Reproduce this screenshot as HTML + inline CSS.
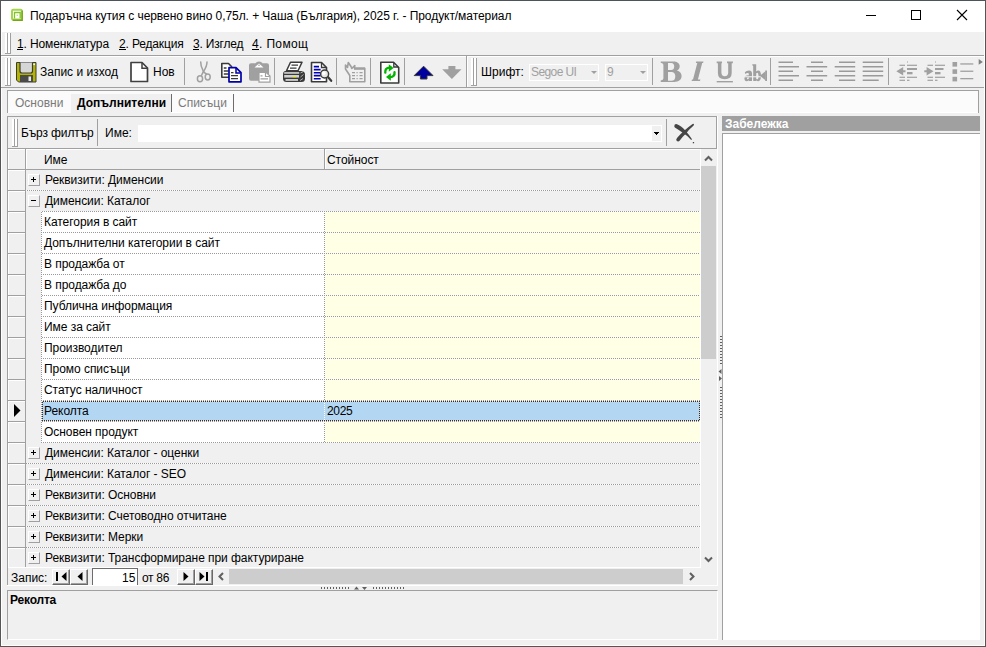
<!DOCTYPE html>
<html><head><meta charset="utf-8">
<style>
*{box-sizing:border-box}
html,body{margin:0;padding:0}
body{width:986px;height:647px;position:relative;overflow:hidden;background:#f0f0f0;font-family:"Liberation Sans",sans-serif;font-size:12px;color:#000}
.a{position:absolute}
.t{position:absolute;white-space:nowrap;line-height:14px}
.hl{position:absolute;height:1px;background:#a0a0a0}
.vl{position:absolute;width:1px;background:#a0a0a0}
.w{background:#fff}
.grip{position:absolute;width:6px}
.grip i{position:absolute;top:0;bottom:1px;width:3px;border-left:2px solid #fff;border-right:1px solid #a0a0a0}
.grip b{position:absolute;left:0;right:0;bottom:0;height:1px;background:#a0a0a0}
.sep{position:absolute;width:1px;background:#a0a0a0}
u{text-decoration:none}
</style></head><body>

<!-- window frame -->
<div class="a" style="left:0;top:0;width:986px;height:1px;background:#4c535b"></div>
<div class="a" style="left:0;top:0;width:1px;height:647px;background:#555"></div>
<div class="a" style="left:985px;top:0;width:1px;height:647px;background:#555"></div>
<div class="a" style="left:0;top:646px;width:986px;height:1px;background:#555"></div>
<div class="a w" style="left:1px;top:1px;width:1px;height:645px"></div>
<div class="a w" style="left:984px;top:1px;width:1px;height:645px"></div>
<div class="a w" style="left:1px;top:645px;width:984px;height:1px"></div>

<!-- title bar -->
<div class="a w" style="left:1px;top:1px;width:984px;height:31px"></div>
<svg class="a" style="left:10px;top:8px" width="14" height="14" viewBox="0 0 14 14">
 <rect x="2" y="1.8" width="9.8" height="9.8" rx="1.2" fill="none" stroke="#a3d64a" stroke-width="2"/>
 <path d="M12.2 2.6V12.2H2.6" stroke="#72a814" stroke-width="1.4" fill="none"/>
 <path d="M4.5 10.6V4.5H10.2V10.2" fill="none" stroke="#86c02c" stroke-width="1.3"/>
 <rect x="6.6" y="6.6" width="1.4" height="1.4" fill="#c0e08a"/>
</svg>
<div class="t" style="left:30px;top:9px;letter-spacing:-0.06px">Подаръчна кутия с червено вино 0,75л. + Чаша (България), 2025 г. - Продукт/материал</div>
<div class="a" style="left:866px;top:15px;width:10px;height:1px;background:#000"></div>
<div class="a" style="left:911px;top:10px;width:10px;height:10px;border:1px solid #000"></div>
<svg class="a" style="left:956px;top:9px" width="12" height="12" viewBox="0 0 12 12"><path d="M1 1L11 11M11 1L1 11" stroke="#000" stroke-width="1.1"/></svg>

<!-- menu bar -->
<div class="grip" style="left:5px;top:33px;height:21px"><i style="left:0"></i><i style="left:3px"></i><b></b></div>
<div class="t" style="left:17px;top:37px;letter-spacing:-0.13px"><u>1</u>. Номенклатура</div>
<div class="t" style="left:119px;top:37px;letter-spacing:-0.15px"><u>2</u>. Редакция</div>
<div class="t" style="left:193px;top:37px;letter-spacing:-0.2px"><u>3</u>. Изглед</div>
<div class="t" style="left:252px;top:37px;letter-spacing:0.35px"><u>4</u>. Помощ</div>
<div class="a" style="left:17px;top:49px;width:6px;height:1px;background:#000"></div>
<div class="a" style="left:119px;top:49px;width:7px;height:1px;background:#000"></div>
<div class="a" style="left:193px;top:49px;width:6px;height:1px;background:#000"></div>
<div class="a" style="left:252px;top:49px;width:7px;height:1px;background:#000"></div>
<div class="hl" style="left:1px;top:55px;width:983px"></div>
<div class="hl w" style="left:1px;top:56px;width:983px"></div>

<!-- toolbar -->
<div class="grip" style="left:5px;top:58px;height:28px"><i style="left:0"></i><i style="left:3px"></i><b></b></div>
<div class="t" style="left:40px;top:65px">Запис и изход</div>
<div class="t" style="left:153px;top:65px">Нов</div>
<div class="sep" style="left:184px;top:58px;height:27px"></div>
<div class="sep" style="left:274px;top:58px;height:27px"></div>
<div class="sep" style="left:336px;top:58px;height:27px"></div>
<div class="sep" style="left:370px;top:58px;height:27px"></div>
<div class="sep" style="left:404px;top:58px;height:27px"></div>
<div class="vl" style="left:466px;top:56px;height:31px"></div>
<div class="vl w" style="left:467px;top:56px;height:31px"></div>
<div class="grip" style="left:471px;top:58px;height:28px"><i style="left:0"></i><i style="left:3px"></i><b></b></div>
<div class="t" style="left:481px;top:65px">Шрифт:</div>
<div class="a" style="left:529px;top:64px;width:70px;height:17px;border:1px solid #fff"></div>
<div class="t" style="left:531px;top:65px;color:#a0a0a0;letter-spacing:-0.6px">Segoe UI</div>
<div class="a" style="left:605px;top:64px;width:43px;height:17px;border:1px solid #fff"></div>
<div class="t" style="left:607px;top:65px;color:#a0a0a0">9</div>
<div class="sep" style="left:652px;top:58px;height:27px"></div>
<div class="sep" style="left:770px;top:58px;height:27px"></div>
<div class="sep" style="left:888px;top:58px;height:27px"></div>
<div class="hl" style="left:1px;top:87px;width:983px"></div>

<!-- toolbar icons -->
<svg class="a" style="left:15px;top:61px" width="22" height="22" viewBox="0 0 22 22">
 <path d="M1.5 1.5H21V21H3.5L1.5 19Z" fill="#b4b400" stroke="#3c3c3c" stroke-width="1"/>
 <path d="M5 1.5V10Q5 12 7 12H15.5Q17.5 12 17.5 10V1.5" fill="#d6d6d6" stroke="#3c3c3c" stroke-width="1.2"/>
 <rect x="18.3" y="2.5" width="1.6" height="1.6" fill="#fff"/>
 <rect x="5" y="14" width="13" height="7" fill="#4a4a4a"/>
 <rect x="13.5" y="15.5" width="2.5" height="4.5" fill="#e8e8e8"/>
</svg>
<svg class="a" style="left:129px;top:61px" width="20" height="22" viewBox="0 0 20 22">
 <path d="M2 1.5H13L18.5 7V20.5H2Z" fill="#fff" stroke="#404040" stroke-width="1.7" stroke-linejoin="round"/>
 <path d="M13 2V7.3H18" fill="none" stroke="#404040" stroke-width="1.5"/>
</svg>
<svg class="a" style="left:192px;top:59px" width="26" height="26" viewBox="0 0 26 26">
 <g fill="none" stroke="#a0a0a0" stroke-width="1.5" stroke-linecap="round">
 <path d="M8.7 3C8.5 7 10 9.5 11.5 12.5C10.3 14.5 10 15.5 9.5 16.5"/>
 <path d="M15 3C15 7 13.5 9.5 11.5 12.5C12.5 14 13.5 14.5 14.5 15"/>
 <ellipse cx="8" cy="19.7" rx="2.6" ry="3"/>
 <ellipse cx="15.7" cy="18" rx="2.5" ry="2.9"/>
 </g>
</svg>
<svg class="a" style="left:218px;top:59px" width="26" height="26" viewBox="0 0 26 26">
 <path d="M3.8 4.5H10.5L13.5 7.5V18.3H3.8Z" fill="#fff" stroke="#3a3a3a" stroke-width="1.6" stroke-linejoin="round"/>
 <g stroke="#3a3a3a" stroke-width="1.5"><path d="M5.8 9H8.5M5.8 12H10.5M5.8 15H10.5"/></g>
 <path d="M11 8.7H18L23 13.7V22.8H11Z" fill="#fff" stroke="#0000a8" stroke-width="1.7" stroke-linejoin="round"/>
 <path d="M18 9V14H22.5" fill="none" stroke="#0000a8" stroke-width="1.5"/>
 <g stroke="#3a3a3a" stroke-width="1.2"><path d="M13 13.6H15.5M13 16.6H20M13 19.7H20"/></g>
</svg>
<svg class="a" style="left:246px;top:59px" width="26" height="26" viewBox="0 0 26 26">
 <path d="M5 4.2H9.5Q10.5 2.5 13 2.5Q15.5 2.5 16.5 4.2H21Q23 4.2 23 6.2V19.7Q23 21.7 21 21.7H5Q3 21.7 3 19.7V6.2Q3 4.2 5 4.2Z" fill="#a0a0a0"/>
 <path d="M8.5 8.5L13 4.5L17.5 8.5Z" fill="#fff"/>
 <circle cx="13" cy="6.3" r="0.8" fill="#a0a0a0"/>
 <path d="M13 13.3H20L24 17V23.2H13Z" fill="#fff" stroke="#a0a0a0" stroke-width="1.2"/>
 <path d="M19.5 13.5V17.5H23.8" fill="none" stroke="#a0a0a0" stroke-width="1.2"/>
 <path d="M14.5 16.8H16.5M14.5 19.8H22" stroke="#a0a0a0" stroke-width="1.2"/>
</svg>
<svg class="a" style="left:281px;top:59px" width="26" height="26" viewBox="0 0 26 26">
 <path d="M9.5 3.3H21L17 11.8H5.5Z" fill="#fff" stroke="#3a3a3a" stroke-width="1.5" stroke-linejoin="round"/>
 <path d="M10.5 6.2H17M9 9.2H15.5" stroke="#3a3a3a" stroke-width="1.2"/>
 <path d="M4.5 12H20Q24 12 24 15.5V19.5Q24 23 20.5 23H5.5Q2 23 2 19.5V15.5Q2 12 4.5 12Z" fill="#3a3a3a"/>
 <rect x="3.2" y="13.2" width="15" height="1.5" fill="#e0e0e0"/>
 <rect x="3.2" y="16" width="14.8" height="2.6" fill="#d0d0d0"/>
 <rect x="12" y="17" width="3" height="1.2" fill="#f0f000"/>
 <rect x="4.5" y="20.2" width="12.5" height="1.5" fill="#f4f4f4"/>
 <path d="M19.5 14L22.5 12.5M19.5 18L22.5 15.5M19 21.5L22 19.5" stroke="#bbb" stroke-width="0.9"/>
</svg>
<svg class="a" style="left:308px;top:59px" width="26" height="26" viewBox="0 0 26 26">
 <path d="M3.5 3.5H13.5L18.5 8.5V22.8H3.5Z" fill="#fff" stroke="#3a3a3a" stroke-width="1.6" stroke-linejoin="round"/>
 <path d="M13.5 4V8.5H18" fill="none" stroke="#3a3a3a" stroke-width="1.3"/>
 <path d="M5.8 7.6H11M5.8 10.6H12.6M5.8 13.7H12.6M5.8 16.6H12.6M5.8 19.7H12.6" stroke="#0000b4" stroke-width="1.6"/>
 <path d="M19.5 17.5L23.2 21.8" stroke="#3a3a3a" stroke-width="2.2" stroke-linecap="round"/>
 <circle cx="16.6" cy="15" r="4" fill="#e8e8e8" stroke="#3a3a3a" stroke-width="1.5"/>
 <circle cx="15.8" cy="14.2" r="1.8" fill="#fff"/>
</svg>
<svg class="a" style="left:342px;top:59px" width="26" height="26" viewBox="0 0 26 26">
 <g fill="none" stroke="#a0a0a0" stroke-width="1.6" stroke-linejoin="round">
 <path d="M12.5 9.3H22.8V22.8H7.8V16.5L3.5 10V6L5.5 8.5L6.3 3.5L9 7.5L9.8 9.5L12.8 6.5Z"/>
 </g>
 <rect x="12" y="8.5" width="11" height="2.3" fill="#a0a0a0"/>
 <path d="M10 13.6H13M14.5 13.6H15.7M17.5 13.6H20.6M10 16.6H13M14.5 16.6H15.7M17.5 16.6H20.6M10 19.7H13M14.5 19.7H15.7M17.5 19.7H20.6" stroke="#a0a0a0" stroke-width="1.3"/>
</svg>
<svg class="a" style="left:376px;top:59px" width="26" height="26" viewBox="0 0 26 26">
 <path d="M4.8 3.3H17.5L22.7 8.5V24H4.8Z" fill="#fff" stroke="#3a3a3a" stroke-width="1.6" stroke-linejoin="round"/>
 <path d="M17.8 3.8V8H22.3" fill="none" stroke="#3a3a3a" stroke-width="1.3"/>
 <path d="M9.3 13.6C8.9 10.5 10.5 8.6 13.5 8.6" fill="none" stroke="#00b400" stroke-width="2.4" stroke-linecap="round"/>
 <path d="M12.8 5.2L17.6 9L12.8 12.8Z" fill="#00b400"/>
 <path d="M18.5 13.1C18.9 16.2 17.3 18.1 14.2 18.1" fill="none" stroke="#00b400" stroke-width="2.4" stroke-linecap="round"/>
 <path d="M14.8 14.3L10 18.1L14.8 21.8Z" fill="#00b400"/>
</svg>
<svg class="a" style="left:410px;top:59px" width="56" height="26" viewBox="0 0 56 26">
 <path d="M13.6 7.2L23 16.6H17V20H10.4V16.6H4.2Z" fill="#0000a0" stroke="#383838" stroke-width="1" stroke-linejoin="miter"/>
 <path d="M38.4 7H45.4V10.3H51.5L41.9 20L32.2 10.3H38.4Z" fill="#a0a0a0"/>
</svg>
<svg class="a" style="left:658px;top:59px" width="112" height="26" viewBox="0 0 112 26"><g fill="#a0a0a0" fill-rule="evenodd">
 <path d="M2.7 2.4H15C19.5 2.4 21.7 4.5 21.7 7.2C21.7 9.3 20.5 10.8 18.8 11.6C21.8 12.3 23.6 14.2 23.6 17C23.6 20.8 20.8 22.9 16 22.9H2.7V21.6Q5.4 21 5.4 19.5V5.8Q5.4 4 2.7 3.7Z M10 3.9H13.2C15.2 3.9 16.2 5.3 16.2 7.4C16.2 9.7 15 11 13 11H10Z M10 12.9H13.5C16 12.9 17.3 14.5 17.3 17.2C17.3 20.2 16 21.7 13.5 21.7H10Z"/>
 <path d="M38.2 2.4H45.5L45.1 4.1H44.2L39.9 20.4H42.4L42 21.9H33.6L34 20.4H35L39.3 4.1H37.8Z"/>
 <path d="M58.7 2.4H64V4.2H63.4V13.5Q63.4 17.2 66.8 17.2Q70.2 17.2 70.2 13.5V4.2H69V2.4H74.9V4.2H73.7V14Q73.7 20.2 66.7 20.2Q59.9 20.2 59.9 14V4.2H58.7Z"/>
 <rect x="58.7" y="22" width="16.2" height="1.4"/>
 <g transform="translate(54 0)">
 <path d="M32.8 13.2Q34.5 11.5 37 11.5Q40 11.5 40 14.5V22H36.8V21.2Q35.8 22.2 34.7 22.2Q32.4 22.2 32.4 19.3Q32.4 16.3 36.8 16.3V14.8Q36.8 13.9 35.8 13.9Q34.5 13.9 33.3 15Z M36.8 18.2Q35 18.3 35 19.4Q35 20.3 35.8 20.3Q36.8 20.3 36.8 19.2Z"/>
 <path d="M40.3 5.3H44.2V12.5Q45 11.5 46.3 11.5Q49 11.5 49 16.8Q49 22.2 46.2 22.2Q45 22.2 44.2 21.3V22H41.2V7L40.3 6.3Z M44.2 14.5V19.8Q44.8 20.3 45.3 20.3Q46.5 20.3 46.5 16.9Q46.5 13.8 45.3 13.8Q44.7 13.8 44.2 14.5Z"/>
 <rect x="32" y="17.2" width="17" height="1.1" fill="#f0f0f0"/>
 <path d="M47.8 16.8L53.5 12.3V21.3Z"/>
 <rect x="53.2" y="11.5" width="1.8" height="10.5"/>
 </g>
</g></svg>
<svg class="a" style="left:770px;top:57px" width="120" height="30" viewBox="0 0 120 30">
 <g stroke="#9a9a9a" stroke-width="1.6">
 <path d="M8.5 5.2H23M8.5 9.7H29M8.5 14.2H23M8.5 18.7H29M8.5 23.2H23"/>
 <path d="M41 5.2H53M36.5 9.7H57.2M41 14.2H53M36.5 18.7H57.2M41 23.2H53"/>
 <path d="M69 5.2H85.2M64.7 9.7H85.2M69 14.2H85.2M64.7 18.7H85.2M69 23.2H85.2"/>
 <path d="M92.7 5.2H113.2M92.7 9.7H113.2M92.7 14.2H113.2M92.7 18.7H113.2M92.7 23.2H108.7"/>
 </g>
</svg>
<svg class="a" style="left:893px;top:59px" width="93" height="26" viewBox="0 0 93 26">
 <g fill="#a0a0a0">
 <rect x="14" y="2.5" width="1" height="1"/>
 <rect x="6.5" y="5.7" width="5.5" height="1.2"/><rect x="14" y="5.7" width="10" height="1.2"/>
 <rect x="14" y="9" width="10" height="2"/><rect x="14" y="13" width="5.5" height="2.3"/>
 <rect x="6.5" y="17.7" width="5.5" height="1.2"/><rect x="14" y="17.7" width="10" height="1.2"/>
 <rect x="6.5" y="20.7" width="5.5" height="1.2"/><rect x="14" y="20.7" width="2.5" height="1.2"/>
 <path d="M3.3 12.2L10.2 8V11.2H12.5V13.2H10.2V16.4Z"/>
 <rect x="42" y="2.5" width="1" height="1"/>
 <rect x="34.5" y="5.7" width="5.5" height="1.2"/><rect x="42" y="5.7" width="10" height="1.2"/>
 <rect x="42" y="9" width="8.5" height="2"/><rect x="42" y="13" width="5.5" height="2.3"/>
 <rect x="34.5" y="17.7" width="5.5" height="1.2"/><rect x="42" y="17.7" width="10" height="1.2"/>
 <rect x="34.5" y="20.7" width="5.5" height="1.2"/><rect x="42" y="20.7" width="2.5" height="1.2"/>
 <path d="M40.5 12.2L33.6 8V11.2H31.3V13.2H33.6V16.4Z"/>
 <rect x="59.5" y="3" width="4.6" height="4.6"/><rect x="59.5" y="10.3" width="4.6" height="4.6"/><rect x="59.5" y="17.8" width="4.6" height="4.6"/>
 <rect x="67.3" y="4.3" width="13" height="1.3"/><rect x="67.3" y="11.6" width="13" height="1.3"/><rect x="67.3" y="19" width="13" height="1.3"/>
 </g>
 <path d="M85.7 0L89.8 2.9L85.7 5.8Z" fill="#808080"/>
</svg>


<!-- tab strip -->
<div class="a" style="left:7px;top:90px;width:972px;height:23px;background:#fbfbfb;border-left:1px solid #a0a0a0;border-top:1px solid #a0a0a0;border-right:1px solid #a0a0a0"></div>
<div class="hl w" style="left:8px;top:112px;width:970px"></div>
<div class="t" style="left:15px;top:96px;color:#7a7a7a">Основни</div>
<div class="a" style="left:71px;top:94px;width:100px;height:19px;background:#f0f0f0"></div>
<div class="t" style="left:77px;top:96px;font-weight:bold">Допълнителни</div>
<div class="vl" style="left:171px;top:94px;height:18px;background:#6d6d6d"></div>
<div class="t" style="left:178px;top:96px;color:#7a7a7a">Списъци</div>
<div class="vl" style="left:233px;top:94px;height:18px;background:#6d6d6d"></div>

<!-- left panel: filter bar -->
<div class="a" style="left:7px;top:116px;width:710px;height:33px;border-left:1px solid #a0a0a0;border-top:1px solid #a0a0a0;border-right:1px solid #a0a0a0;border-bottom:1px solid #a0a0a0"></div>
<div class="grip" style="left:12px;top:119px;height:28px"><i style="left:0"></i><i style="left:3px"></i><b></b></div>
<div class="t" style="left:21px;top:126px;letter-spacing:-0.13px">Бърз филтър</div>
<div class="sep" style="left:97px;top:119px;height:27px"></div>
<div class="t" style="left:105px;top:126px">Име:</div>
<div class="a w" style="left:138px;top:125px;width:524px;height:17px"></div>
<div class="a" style="left:652px;top:126px;width:9px;height:15px;background:#f0f0f0"></div>
<div class="a" style="left:654px;top:132px;width:5px;height:1px;background:#000"></div><div class="a" style="left:655px;top:133px;width:3px;height:1px;background:#000"></div><div class="a" style="left:656px;top:134px;width:1px;height:1px;background:#000"></div>
<div class="sep" style="left:666px;top:119px;height:27px"></div>
<svg class="a" style="left:670px;top:119px" width="28" height="28" viewBox="0 0 28 28"><g fill="#454545">
<path d="M4.3 7.2Q4.3 4.6 7 5.2Q11 6.6 15.3 11.6Q19 15.8 22 20.3L21.2 21Q17.5 16.8 13.8 14.6Q8.5 10.5 5.6 9Q4.3 8.3 4.3 7.2Z"/>
<path d="M24 5.2Q24.3 6.2 22.6 7.6Q18.6 11 16.2 14.3Q12.3 18 9.8 21.6Q8.2 23.2 6.6 21.8Q5.5 20.4 7.4 18.4Q11 14.6 13.8 12Q18.8 7.6 22.6 5Q23.6 4.5 24 5.2Z"/>
<rect x="22.8" y="23" width="1.3" height="1.3"/></g></svg>

<!-- grid -->
<div class="a" style="left:7px;top:148px;width:694px;height:420px;overflow:hidden">
<div class="a" style="left:0px;top:0px;width:694px;height:1px;background:#a0a0a0"></div>
<div class="a" style="left:0px;top:0px;width:1px;height:420px;background:#a0a0a0"></div>
<div class="a" style="left:1px;top:1px;width:17px;height:20px;border-top:1px solid #fff;border-left:1px solid #fff"></div>
<div class="a" style="left:18px;top:1px;width:1px;height:420px;background:#a0a0a0"></div>
<div class="a" style="left:1px;top:21px;width:693px;height:1px;background:#a0a0a0"></div>
<div class="a" style="left:19px;top:1px;width:298px;height:20px;border-top:1px solid #fff;border-left:1px solid #fff"></div>
<div class="a" style="left:317px;top:1px;width:1px;height:20px;background:#a0a0a0"></div>
<div class="a" style="left:318px;top:1px;width:375px;height:20px;border-top:1px solid #fff;border-left:1px solid #fff"></div>
<div class="t" style="left:37px;top:5px;letter-spacing:-0.05px">Име</div>
<div class="t" style="left:320px;top:5px;letter-spacing:-0.05px">Стойност</div>
<div class="a" style="left:1px;top:22px;width:17px;height:20px;border-top:1px solid #fff;border-left:1px solid #fff"></div>
<div class="a" style="left:1px;top:42px;width:17px;height:1px;background:#a0a0a0"></div>
<div class="a" style="left:19px;top:42px;width:674px;height:1px;background:repeating-linear-gradient(90deg,#fff 0 1px,#999 1px 2px)"></div>
<div class="a" style="left:21px;top:26px;width:12px;height:12px;border-top:1px solid #fff;border-left:1px solid #fff;border-right:1px solid #a0a0a0;border-bottom:1px solid #a0a0a0"></div>
<div class="a" style="left:24px;top:31px;width:5px;height:1px;background:#000"></div>
<div class="a" style="left:26px;top:29px;width:1px;height:5px;background:#000"></div>
<div class="t" style="left:38px;top:25px;letter-spacing:-0.05px">Реквизити: Дименсии</div>
<div class="a" style="left:1px;top:43px;width:17px;height:20px;border-top:1px solid #fff;border-left:1px solid #fff"></div>
<div class="a" style="left:1px;top:63px;width:17px;height:1px;background:#a0a0a0"></div>
<div class="a" style="left:34px;top:63px;width:659px;height:1px;background:repeating-linear-gradient(90deg,#fff 0 1px,#999 1px 2px)"></div>
<div class="a" style="left:21px;top:47px;width:12px;height:12px;border-top:1px solid #fff;border-left:1px solid #fff;border-right:1px solid #a0a0a0;border-bottom:1px solid #a0a0a0"></div>
<div class="a" style="left:24px;top:52px;width:5px;height:1px;background:#000"></div>
<div class="t" style="left:38px;top:46px;letter-spacing:-0.05px">Дименсии: Каталог</div>
<div class="a" style="left:1px;top:64px;width:17px;height:20px;border-top:1px solid #fff;border-left:1px solid #fff"></div>
<div class="a" style="left:1px;top:84px;width:17px;height:1px;background:#a0a0a0"></div>
<div class="a" style="left:35px;top:64px;width:282px;height:20px;background:#fff"></div>
<div class="a" style="left:318px;top:64px;width:375px;height:20px;background:#ffffe6"></div>
<div class="a" style="left:34px;top:64px;width:1px;height:21px;background:repeating-linear-gradient(180deg,#999 0 1px,#fff 1px 2px)"></div>
<div class="a" style="left:317px;top:64px;width:1px;height:20px;background:repeating-linear-gradient(180deg,#fff 0 1px,#999 1px 2px)"></div>
<div class="a" style="left:34px;top:84px;width:659px;height:1px;background:repeating-linear-gradient(90deg,#999 0 1px,#fff 1px 2px)"></div>
<div class="t" style="left:37px;top:67px;letter-spacing:-0.05px">Категория в сайт</div>
<div class="a" style="left:1px;top:85px;width:17px;height:20px;border-top:1px solid #fff;border-left:1px solid #fff"></div>
<div class="a" style="left:1px;top:105px;width:17px;height:1px;background:#a0a0a0"></div>
<div class="a" style="left:35px;top:85px;width:282px;height:20px;background:#fff"></div>
<div class="a" style="left:318px;top:85px;width:375px;height:20px;background:#ffffe6"></div>
<div class="a" style="left:34px;top:85px;width:1px;height:21px;background:repeating-linear-gradient(180deg,#fff 0 1px,#999 1px 2px)"></div>
<div class="a" style="left:317px;top:85px;width:1px;height:20px;background:repeating-linear-gradient(180deg,#999 0 1px,#fff 1px 2px)"></div>
<div class="a" style="left:34px;top:105px;width:659px;height:1px;background:repeating-linear-gradient(90deg,#fff 0 1px,#999 1px 2px)"></div>
<div class="t" style="left:37px;top:88px;letter-spacing:-0.05px">Допълнителни категории в сайт</div>
<div class="a" style="left:1px;top:106px;width:17px;height:20px;border-top:1px solid #fff;border-left:1px solid #fff"></div>
<div class="a" style="left:1px;top:126px;width:17px;height:1px;background:#a0a0a0"></div>
<div class="a" style="left:35px;top:106px;width:282px;height:20px;background:#fff"></div>
<div class="a" style="left:318px;top:106px;width:375px;height:20px;background:#ffffe6"></div>
<div class="a" style="left:34px;top:106px;width:1px;height:21px;background:repeating-linear-gradient(180deg,#999 0 1px,#fff 1px 2px)"></div>
<div class="a" style="left:317px;top:106px;width:1px;height:20px;background:repeating-linear-gradient(180deg,#fff 0 1px,#999 1px 2px)"></div>
<div class="a" style="left:34px;top:126px;width:659px;height:1px;background:repeating-linear-gradient(90deg,#999 0 1px,#fff 1px 2px)"></div>
<div class="t" style="left:37px;top:109px;letter-spacing:-0.05px">В продажба от</div>
<div class="a" style="left:1px;top:127px;width:17px;height:20px;border-top:1px solid #fff;border-left:1px solid #fff"></div>
<div class="a" style="left:1px;top:147px;width:17px;height:1px;background:#a0a0a0"></div>
<div class="a" style="left:35px;top:127px;width:282px;height:20px;background:#fff"></div>
<div class="a" style="left:318px;top:127px;width:375px;height:20px;background:#ffffe6"></div>
<div class="a" style="left:34px;top:127px;width:1px;height:21px;background:repeating-linear-gradient(180deg,#fff 0 1px,#999 1px 2px)"></div>
<div class="a" style="left:317px;top:127px;width:1px;height:20px;background:repeating-linear-gradient(180deg,#999 0 1px,#fff 1px 2px)"></div>
<div class="a" style="left:34px;top:147px;width:659px;height:1px;background:repeating-linear-gradient(90deg,#fff 0 1px,#999 1px 2px)"></div>
<div class="t" style="left:37px;top:130px;letter-spacing:-0.05px">В продажба до</div>
<div class="a" style="left:1px;top:148px;width:17px;height:20px;border-top:1px solid #fff;border-left:1px solid #fff"></div>
<div class="a" style="left:1px;top:168px;width:17px;height:1px;background:#a0a0a0"></div>
<div class="a" style="left:35px;top:148px;width:282px;height:20px;background:#fff"></div>
<div class="a" style="left:318px;top:148px;width:375px;height:20px;background:#ffffe6"></div>
<div class="a" style="left:34px;top:148px;width:1px;height:21px;background:repeating-linear-gradient(180deg,#999 0 1px,#fff 1px 2px)"></div>
<div class="a" style="left:317px;top:148px;width:1px;height:20px;background:repeating-linear-gradient(180deg,#fff 0 1px,#999 1px 2px)"></div>
<div class="a" style="left:34px;top:168px;width:659px;height:1px;background:repeating-linear-gradient(90deg,#999 0 1px,#fff 1px 2px)"></div>
<div class="t" style="left:37px;top:151px;letter-spacing:-0.05px">Публична информация</div>
<div class="a" style="left:1px;top:169px;width:17px;height:20px;border-top:1px solid #fff;border-left:1px solid #fff"></div>
<div class="a" style="left:1px;top:189px;width:17px;height:1px;background:#a0a0a0"></div>
<div class="a" style="left:35px;top:169px;width:282px;height:20px;background:#fff"></div>
<div class="a" style="left:318px;top:169px;width:375px;height:20px;background:#ffffe6"></div>
<div class="a" style="left:34px;top:169px;width:1px;height:21px;background:repeating-linear-gradient(180deg,#fff 0 1px,#999 1px 2px)"></div>
<div class="a" style="left:317px;top:169px;width:1px;height:20px;background:repeating-linear-gradient(180deg,#999 0 1px,#fff 1px 2px)"></div>
<div class="a" style="left:34px;top:189px;width:659px;height:1px;background:repeating-linear-gradient(90deg,#fff 0 1px,#999 1px 2px)"></div>
<div class="t" style="left:37px;top:172px;letter-spacing:-0.05px">Име за сайт</div>
<div class="a" style="left:1px;top:190px;width:17px;height:20px;border-top:1px solid #fff;border-left:1px solid #fff"></div>
<div class="a" style="left:1px;top:210px;width:17px;height:1px;background:#a0a0a0"></div>
<div class="a" style="left:35px;top:190px;width:282px;height:20px;background:#fff"></div>
<div class="a" style="left:318px;top:190px;width:375px;height:20px;background:#ffffe6"></div>
<div class="a" style="left:34px;top:190px;width:1px;height:21px;background:repeating-linear-gradient(180deg,#999 0 1px,#fff 1px 2px)"></div>
<div class="a" style="left:317px;top:190px;width:1px;height:20px;background:repeating-linear-gradient(180deg,#fff 0 1px,#999 1px 2px)"></div>
<div class="a" style="left:34px;top:210px;width:659px;height:1px;background:repeating-linear-gradient(90deg,#999 0 1px,#fff 1px 2px)"></div>
<div class="t" style="left:37px;top:193px;letter-spacing:-0.05px">Производител</div>
<div class="a" style="left:1px;top:211px;width:17px;height:20px;border-top:1px solid #fff;border-left:1px solid #fff"></div>
<div class="a" style="left:1px;top:231px;width:17px;height:1px;background:#a0a0a0"></div>
<div class="a" style="left:35px;top:211px;width:282px;height:20px;background:#fff"></div>
<div class="a" style="left:318px;top:211px;width:375px;height:20px;background:#ffffe6"></div>
<div class="a" style="left:34px;top:211px;width:1px;height:21px;background:repeating-linear-gradient(180deg,#fff 0 1px,#999 1px 2px)"></div>
<div class="a" style="left:317px;top:211px;width:1px;height:20px;background:repeating-linear-gradient(180deg,#999 0 1px,#fff 1px 2px)"></div>
<div class="a" style="left:34px;top:231px;width:659px;height:1px;background:repeating-linear-gradient(90deg,#fff 0 1px,#999 1px 2px)"></div>
<div class="t" style="left:37px;top:214px;letter-spacing:-0.05px">Промо списъци</div>
<div class="a" style="left:1px;top:232px;width:17px;height:20px;border-top:1px solid #fff;border-left:1px solid #fff"></div>
<div class="a" style="left:1px;top:252px;width:17px;height:1px;background:#a0a0a0"></div>
<div class="a" style="left:35px;top:232px;width:282px;height:20px;background:#fff"></div>
<div class="a" style="left:318px;top:232px;width:375px;height:20px;background:#ffffe6"></div>
<div class="a" style="left:34px;top:232px;width:1px;height:21px;background:repeating-linear-gradient(180deg,#999 0 1px,#fff 1px 2px)"></div>
<div class="a" style="left:317px;top:232px;width:1px;height:20px;background:repeating-linear-gradient(180deg,#fff 0 1px,#999 1px 2px)"></div>
<div class="a" style="left:34px;top:252px;width:659px;height:1px;background:repeating-linear-gradient(90deg,#999 0 1px,#fff 1px 2px)"></div>
<div class="t" style="left:37px;top:235px;letter-spacing:-0.05px">Статус наличност</div>
<div class="a" style="left:1px;top:253px;width:17px;height:20px;border-top:1px solid #fff;border-left:1px solid #fff"></div>
<div class="a" style="left:1px;top:273px;width:17px;height:1px;background:#a0a0a0"></div>
<div class="a" style="left:35px;top:253px;width:282px;height:20px;background:#fff"></div>
<div class="a" style="left:318px;top:253px;width:375px;height:20px;background:#ffffe6"></div>
<div class="a" style="left:34px;top:253px;width:1px;height:21px;background:repeating-linear-gradient(180deg,#fff 0 1px,#999 1px 2px)"></div>
<div class="a" style="left:317px;top:253px;width:1px;height:20px;background:repeating-linear-gradient(180deg,#999 0 1px,#fff 1px 2px)"></div>
<div class="a" style="left:34px;top:273px;width:659px;height:1px;background:repeating-linear-gradient(90deg,#fff 0 1px,#999 1px 2px)"></div>
<div class="a" style="left:35px;top:253px;width:658px;height:20px;background:#b3d7f3"></div>
<div class="a" style="left:317px;top:253px;width:1px;height:20px;background:repeating-linear-gradient(180deg,#fff 0 1px,#b3d7f3 1px 2px)"></div>
<div class="a" style="left:35px;top:253px;width:658px;height:1px;background:repeating-linear-gradient(90deg,#d4e6f6 0 1px,#4a2a0c 1px 2px)"></div>
<div class="a" style="left:35px;top:272px;width:658px;height:1px;background:repeating-linear-gradient(90deg,#4a2a0c 0 1px,#d4e6f6 1px 2px)"></div>
<div class="a" style="left:35px;top:253px;width:1px;height:20px;background:repeating-linear-gradient(180deg,#b3d7f3 0 1px,#4a2a0c 1px 2px)"></div>
<div class="a" style="left:692px;top:253px;width:1px;height:20px;background:repeating-linear-gradient(180deg,#4a2a0c 0 1px,#b3d7f3 1px 2px)"></div>
<svg class="a" style="left:7px;top:256px" width="7" height="13"><path d="M0 0L6.5 6.5L0 13z" fill="#000"/></svg>
<div class="t" style="left:37px;top:256px;letter-spacing:-0.05px">Реколта</div>
<div class="t" style="left:320px;top:256px;letter-spacing:-0.3px">2025</div>
<div class="a" style="left:1px;top:274px;width:17px;height:20px;border-top:1px solid #fff;border-left:1px solid #fff"></div>
<div class="a" style="left:1px;top:294px;width:17px;height:1px;background:#a0a0a0"></div>
<div class="a" style="left:35px;top:274px;width:282px;height:20px;background:#fff"></div>
<div class="a" style="left:318px;top:274px;width:375px;height:20px;background:#ffffe6"></div>
<div class="a" style="left:34px;top:274px;width:1px;height:21px;background:repeating-linear-gradient(180deg,#999 0 1px,#fff 1px 2px)"></div>
<div class="a" style="left:317px;top:274px;width:1px;height:20px;background:repeating-linear-gradient(180deg,#fff 0 1px,#999 1px 2px)"></div>
<div class="a" style="left:34px;top:294px;width:659px;height:1px;background:repeating-linear-gradient(90deg,#999 0 1px,#fff 1px 2px)"></div>
<div class="t" style="left:37px;top:277px;letter-spacing:-0.05px">Основен продукт</div>
<div class="a" style="left:1px;top:295px;width:17px;height:20px;border-top:1px solid #fff;border-left:1px solid #fff"></div>
<div class="a" style="left:1px;top:315px;width:17px;height:1px;background:#a0a0a0"></div>
<div class="a" style="left:19px;top:315px;width:674px;height:1px;background:repeating-linear-gradient(90deg,#999 0 1px,#fff 1px 2px)"></div>
<div class="a" style="left:21px;top:299px;width:12px;height:12px;border-top:1px solid #fff;border-left:1px solid #fff;border-right:1px solid #a0a0a0;border-bottom:1px solid #a0a0a0"></div>
<div class="a" style="left:24px;top:304px;width:5px;height:1px;background:#000"></div>
<div class="a" style="left:26px;top:302px;width:1px;height:5px;background:#000"></div>
<div class="t" style="left:38px;top:298px;letter-spacing:-0.05px">Дименсии: Каталог - оценки</div>
<div class="a" style="left:1px;top:316px;width:17px;height:20px;border-top:1px solid #fff;border-left:1px solid #fff"></div>
<div class="a" style="left:1px;top:336px;width:17px;height:1px;background:#a0a0a0"></div>
<div class="a" style="left:19px;top:336px;width:674px;height:1px;background:repeating-linear-gradient(90deg,#fff 0 1px,#999 1px 2px)"></div>
<div class="a" style="left:21px;top:320px;width:12px;height:12px;border-top:1px solid #fff;border-left:1px solid #fff;border-right:1px solid #a0a0a0;border-bottom:1px solid #a0a0a0"></div>
<div class="a" style="left:24px;top:325px;width:5px;height:1px;background:#000"></div>
<div class="a" style="left:26px;top:323px;width:1px;height:5px;background:#000"></div>
<div class="t" style="left:38px;top:319px;letter-spacing:-0.05px">Дименсии: Каталог - SEO</div>
<div class="a" style="left:1px;top:337px;width:17px;height:20px;border-top:1px solid #fff;border-left:1px solid #fff"></div>
<div class="a" style="left:1px;top:357px;width:17px;height:1px;background:#a0a0a0"></div>
<div class="a" style="left:19px;top:357px;width:674px;height:1px;background:repeating-linear-gradient(90deg,#999 0 1px,#fff 1px 2px)"></div>
<div class="a" style="left:21px;top:341px;width:12px;height:12px;border-top:1px solid #fff;border-left:1px solid #fff;border-right:1px solid #a0a0a0;border-bottom:1px solid #a0a0a0"></div>
<div class="a" style="left:24px;top:346px;width:5px;height:1px;background:#000"></div>
<div class="a" style="left:26px;top:344px;width:1px;height:5px;background:#000"></div>
<div class="t" style="left:38px;top:340px;letter-spacing:-0.05px">Реквизити: Основни</div>
<div class="a" style="left:1px;top:358px;width:17px;height:20px;border-top:1px solid #fff;border-left:1px solid #fff"></div>
<div class="a" style="left:1px;top:378px;width:17px;height:1px;background:#a0a0a0"></div>
<div class="a" style="left:19px;top:378px;width:674px;height:1px;background:repeating-linear-gradient(90deg,#fff 0 1px,#999 1px 2px)"></div>
<div class="a" style="left:21px;top:362px;width:12px;height:12px;border-top:1px solid #fff;border-left:1px solid #fff;border-right:1px solid #a0a0a0;border-bottom:1px solid #a0a0a0"></div>
<div class="a" style="left:24px;top:367px;width:5px;height:1px;background:#000"></div>
<div class="a" style="left:26px;top:365px;width:1px;height:5px;background:#000"></div>
<div class="t" style="left:38px;top:361px;letter-spacing:-0.05px">Реквизити: Счетоводно отчитане</div>
<div class="a" style="left:1px;top:379px;width:17px;height:20px;border-top:1px solid #fff;border-left:1px solid #fff"></div>
<div class="a" style="left:1px;top:399px;width:17px;height:1px;background:#a0a0a0"></div>
<div class="a" style="left:19px;top:399px;width:674px;height:1px;background:repeating-linear-gradient(90deg,#999 0 1px,#fff 1px 2px)"></div>
<div class="a" style="left:21px;top:383px;width:12px;height:12px;border-top:1px solid #fff;border-left:1px solid #fff;border-right:1px solid #a0a0a0;border-bottom:1px solid #a0a0a0"></div>
<div class="a" style="left:24px;top:388px;width:5px;height:1px;background:#000"></div>
<div class="a" style="left:26px;top:386px;width:1px;height:5px;background:#000"></div>
<div class="t" style="left:38px;top:382px;letter-spacing:-0.05px">Реквизити: Мерки</div>
<div class="a" style="left:1px;top:400px;width:17px;height:20px;border-top:1px solid #fff;border-left:1px solid #fff"></div>
<div class="a" style="left:1px;top:420px;width:17px;height:1px;background:#a0a0a0"></div>
<div class="a" style="left:19px;top:420px;width:674px;height:1px;background:repeating-linear-gradient(90deg,#fff 0 1px,#999 1px 2px)"></div>
<div class="a" style="left:21px;top:404px;width:12px;height:12px;border-top:1px solid #fff;border-left:1px solid #fff;border-right:1px solid #a0a0a0;border-bottom:1px solid #a0a0a0"></div>
<div class="a" style="left:24px;top:409px;width:5px;height:1px;background:#000"></div>
<div class="a" style="left:26px;top:407px;width:1px;height:5px;background:#000"></div>
<div class="t" style="left:38px;top:403px;letter-spacing:-0.05px">Реквизити: Трансформиране при фактуриране</div>
<div class="a" style="left:693px;top:1px;width:1px;height:419px;background:#fff"></div>
<div class="a" style="left:1px;top:419px;width:693px;height:1px;background:#fff"></div>
</div>
<!-- /grid -->

<!-- v scrollbar -->
<svg class="a" style="left:704px;top:154px" width="9" height="8" viewBox="0 0 9 8"><path d="M1 6.5L4.5 3L8 6.5" fill="none" stroke="#606060" stroke-width="2"/></svg>
<div class="a" style="left:701px;top:166px;width:15px;height:193px;background:#cdcdcd"></div>
<svg class="a" style="left:704px;top:556px" width="9" height="8" viewBox="0 0 9 8"><path d="M1 1.5L4.5 5L8 1.5" fill="none" stroke="#606060" stroke-width="2"/></svg>

<!-- nav bar -->
<div class="t" style="left:11px;top:571px">Запис:</div>
<div class="a" style="left:52px;top:569px;width:18px;height:16px;border-left:1px solid #fff;border-top:1px solid #fff;border-right:1px solid #696969;border-bottom:1px solid #696969;box-shadow:inset -1px -1px 0 #a0a0a0"></div>
<div class="a" style="left:70px;top:569px;width:18px;height:16px;border-left:1px solid #fff;border-top:1px solid #fff;border-right:1px solid #696969;border-bottom:1px solid #696969;box-shadow:inset -1px -1px 0 #a0a0a0"></div>
<div class="a" style="left:56px;top:572px;width:2px;height:9px;background:#000"></div>
<svg class="a" style="left:61px;top:572px" width="6" height="9"><path d="M5.5 0V9L0.5 4.5Z" fill="#000"/></svg>
<svg class="a" style="left:77px;top:572px" width="6" height="9"><path d="M5.5 0V9L0.5 4.5Z" fill="#000"/></svg>
<div class="a" style="left:92px;top:568px;width:46px;height:17px;background:#fff;border-left:1px solid #6d6d6d;border-top:1px solid #6d6d6d;border-right:1px solid #6d6d6d"></div>
<div class="t" style="left:122px;top:571px">15</div>
<div class="t" style="left:142px;top:571px;letter-spacing:-0.3px">от 86</div>
<div class="a" style="left:177px;top:569px;width:18px;height:16px;border-left:1px solid #fff;border-top:1px solid #fff;border-right:1px solid #696969;border-bottom:1px solid #696969;box-shadow:inset -1px -1px 0 #a0a0a0"></div>
<div class="a" style="left:195px;top:569px;width:18px;height:16px;border-left:1px solid #fff;border-top:1px solid #fff;border-right:1px solid #696969;border-bottom:1px solid #696969;box-shadow:inset -1px -1px 0 #a0a0a0"></div>
<svg class="a" style="left:183px;top:572px" width="6" height="9"><path d="M0.5 0V9L5.5 4.5Z" fill="#000"/></svg>
<svg class="a" style="left:199px;top:572px" width="6" height="9"><path d="M0.5 0V9L5.5 4.5Z" fill="#000"/></svg>
<div class="a" style="left:206px;top:572px;width:2px;height:9px;background:#000"></div>
<svg class="a" style="left:217px;top:572px" width="8" height="9" viewBox="0 0 8 9"><path d="M6 1L2.5 4.5L6 8" fill="none" stroke="#606060" stroke-width="2"/></svg>
<div class="a" style="left:229px;top:569px;width:454px;height:15px;background:#cdcdcd"></div>
<svg class="a" style="left:688px;top:572px" width="8" height="9" viewBox="0 0 8 9"><path d="M2 1L5.5 4.5L2 8" fill="none" stroke="#606060" stroke-width="2"/></svg>
<div class="a" style="left:717px;top:116px;width:1px;height:470px;background:#fff"></div>
<div class="a" style="left:7px;top:585px;width:711px;height:1px;background:#fff"></div>
<div class="a" style="left:7px;top:148px;width:1px;height:437px;background:#a0a0a0"></div>

<!-- h splitter -->
<div class="a" style="left:321px;top:587px;width:30px;height:2px;background:repeating-linear-gradient(90deg,#606060 0 1px,transparent 1px 3px)"></div>
<svg class="a" style="left:353px;top:585px" width="16" height="6" viewBox="0 0 16 6"><path d="M1 4.5L3.5 1.5L6 4.5Z M9 2L14 2L11.5 5Z" fill="#606060"/></svg>
<div class="a" style="left:373px;top:587px;width:32px;height:2px;background:repeating-linear-gradient(90deg,#606060 0 1px,transparent 1px 3px)"></div>

<!-- v splitter -->
<div class="a" style="left:720px;top:336px;width:2px;height:30px;background:repeating-linear-gradient(180deg,#606060 0 1px,transparent 1px 3px)"></div>
<svg class="a" style="left:717px;top:367px" width="6" height="16" viewBox="0 0 6 16"><path d="M4.5 2L1.5 4.5L4.5 7Z M2 9V14L5 11.5Z" fill="#606060"/></svg>
<div class="a" style="left:720px;top:387px;width:2px;height:32px;background:repeating-linear-gradient(180deg,#606060 0 1px,transparent 1px 3px)"></div>

<!-- font combo arrows -->
<svg class="a" style="left:591px;top:71px" width="7" height="4"><path d="M0 0H6L3 3z" fill="#a0a0a0"/></svg>
<svg class="a" style="left:640px;top:71px" width="7" height="4"><path d="M0 0H6L3 3z" fill="#a0a0a0"/></svg>

<!-- right panel -->
<div class="a" style="left:722px;top:116px;width:258px;height:15px;background:#a0a0a0"></div>
<div class="t" style="left:725px;top:117px;color:#fff;font-weight:bold">Забележка</div>
<div class="a w" style="left:722px;top:133px;width:258px;height:507px;border-left:1px solid #a0a0a0;border-top:1px solid #a0a0a0"></div>

<!-- bottom description -->
<div class="a" style="left:7px;top:590px;width:711px;height:50px;border-left:1px solid #a0a0a0;border-top:1px solid #a0a0a0;border-bottom:1px solid #fff;border-right:1px solid #fff"></div>
<div class="t" style="left:10px;top:593px;font-weight:bold;letter-spacing:-0.2px">Реколта</div>

</body></html>
